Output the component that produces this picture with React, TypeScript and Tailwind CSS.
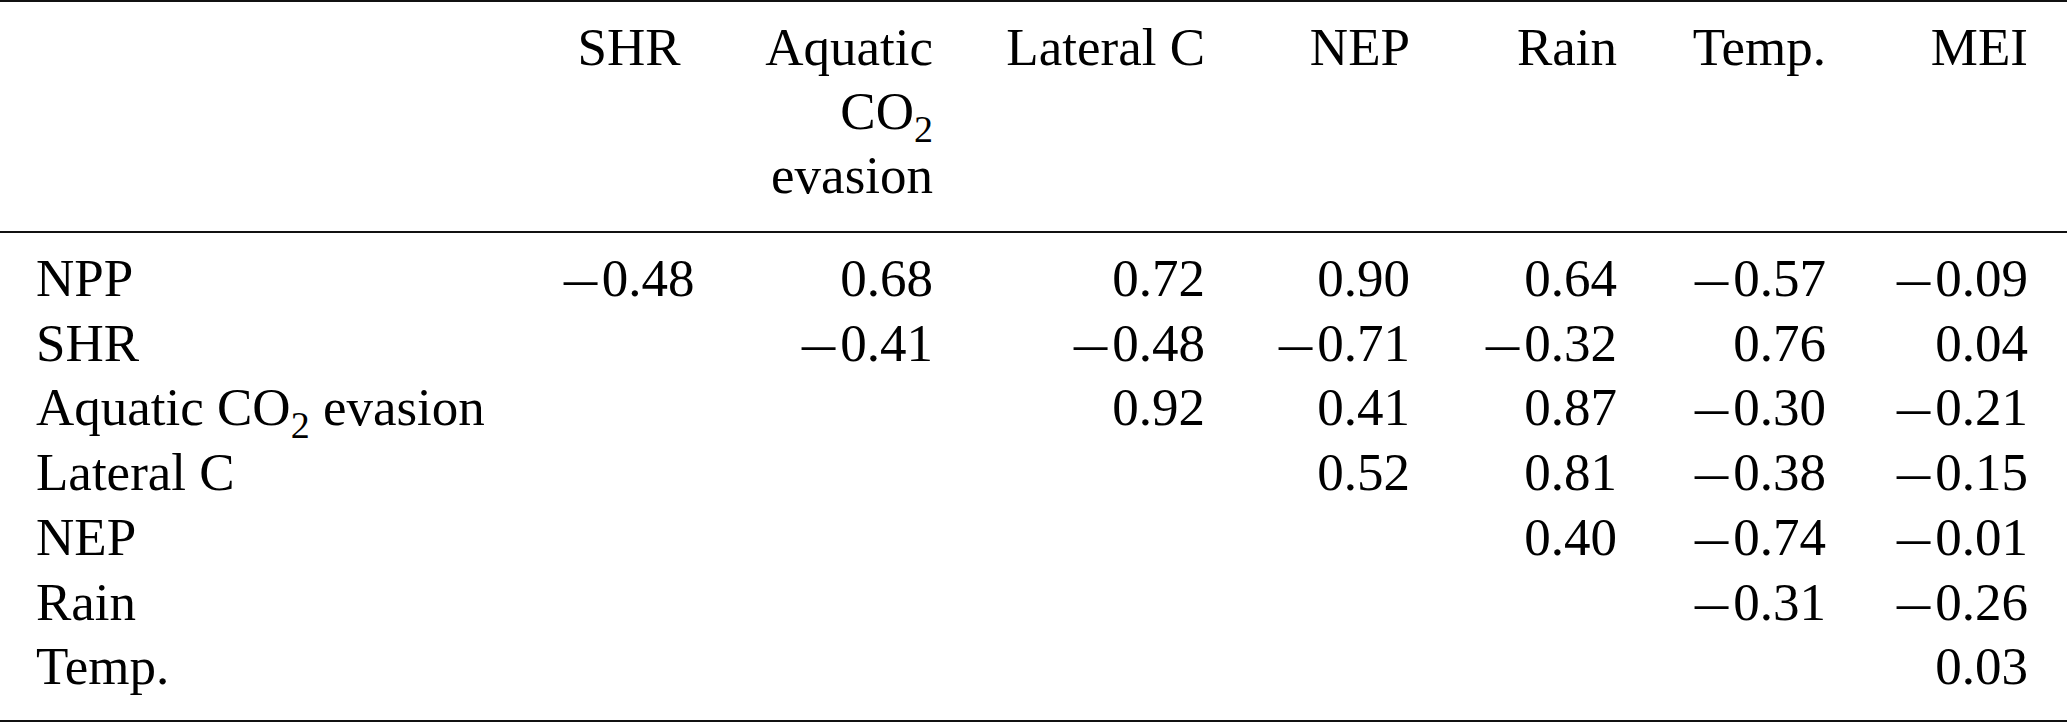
const COLS = 'grid grid-cols-[484px_218px_195px_272px_205px_207px_209px_202px] pl-[36px]';

type Cell = string | null;

const rows: { label: React.ReactNode; values: Cell[] }[] = [
  { label: 'NPP', values: ['-0.48', '0.68', '0.72', '0.90', '0.64', '-0.57', '-0.09'] },
  { label: 'SHR', values: [null, '-0.41', '-0.48', '-0.71', '-0.32', '0.76', '0.04'] },
  {
    label: (
      <>
        Aquatic CO<Sub>2</Sub> evasion
      </>
    ),
    values: [null, null, '0.92', '0.41', '0.87', '-0.30', '-0.21'],
  },
  { label: 'Lateral C', values: [null, null, null, '0.52', '0.81', '-0.38', '-0.15'] },
  { label: 'NEP', values: [null, null, null, null, '0.40', '-0.74', '-0.01'] },
  { label: 'Rain', values: [null, null, null, null, null, '-0.31', '-0.26'] },
  { label: 'Temp.', values: [null, null, null, null, null, null, '0.03'] },
];

function Sub({ children }: { children: React.ReactNode }) {
  return <span className="relative top-[13px] text-[38px] leading-none">{children}</span>;
}

// LaTeX-style long minus sign
function Num({ value }: { value: string }) {
  if (value.startsWith('-')) {
    return (
      <span className="whitespace-nowrap">
        <span className="inline-block w-[38px] text-left">
          <span className="inline-block origin-left scale-x-[1.25]">–</span>
        </span>
        {value.slice(1)}
      </span>
    );
  }
  return <span>{value}</span>;
}

export default function App() {
  return (
    <div
      className="w-[2067px] h-[725px] bg-white text-black text-[53px]"
      style={{ fontFamily: '"Liberation Serif", "Times New Roman", serif' }}
    >
      <div className="h-[2px] bg-[#111]" />

      {/* Header */}
      <div className={`${COLS} pt-[13px] pb-[24px] leading-[64px]`}>
        <div />
        <div className="text-center">SHR</div>
        <div className="text-right">
          <div>Aquatic</div>
          <div>
            CO<Sub>2</Sub>
          </div>
          <div>evasion</div>
        </div>
        <div className="text-right">Lateral C</div>
        <div className="text-right">NEP</div>
        <div className="text-right">Rain</div>
        <div className="text-right">Temp.</div>
        <div className="text-right">MEI</div>
      </div>

      <div className="h-[2px] bg-[#111]" />

      {/* Body */}
      <div className="pt-[13px] pb-[21px] leading-[64.7px]">
        {rows.map((row, i) => (
          <div key={i} className={COLS}>
            <div className="whitespace-nowrap">{row.label}</div>
            {row.values.map((v, j) => (
              <div key={j} className={j === 0 ? 'text-center' : 'text-right'}>
                {v ? <Num value={v} /> : null}
              </div>
            ))}
          </div>
        ))}
      </div>

      <div className="h-[2px] bg-[#111]" />
    </div>
  );
}
